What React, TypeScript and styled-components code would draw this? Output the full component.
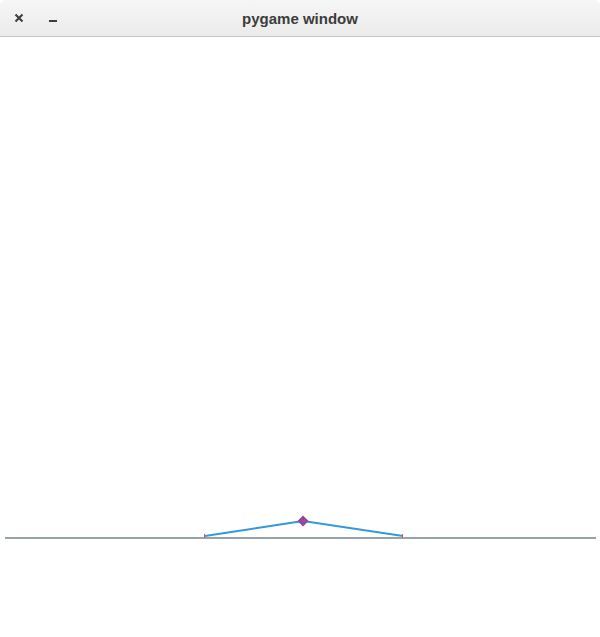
import React from 'react';
import styled, { createGlobalStyle } from 'styled-components';

const GlobalStyle = createGlobalStyle`
  html, body {
    margin: 0;
    padding: 0;
    background: #ffffff;
  }
`;

const Window = styled.div`
  width: 600px;
  height: 637px;
  display: flex;
  flex-direction: column;
  background: #ffffff;
  overflow: hidden;
`;

const TitleBar = styled.div`
  height: 36px;
  flex: none;
  display: flex;
  align-items: center;
  position: relative;
  background: linear-gradient(#f6f6f6, #ebebeb);
  border-bottom: 1px solid #c4c4c4;
  border-radius: 6px 6px 0 0;
  font-family: 'Liberation Sans', 'Noto Sans', sans-serif;
  color: #3c3c3c;
`;

const Controls = styled.div`
  display: flex;
  align-items: center;
  gap: 20px;
  padding-left: 12px;
`;

const ControlButton = styled.span`
  width: 14px;
  display: flex;
  justify-content: center;
  align-items: center;
`;

const Title = styled.div`
  position: absolute;
  left: 0;
  right: 0;
  text-align: center;
  font-size: 15px;
  font-weight: bold;
  pointer-events: none;
`;

const Canvas = styled.svg`
  display: block;
  flex: none;
`;

const groundY = 501;
const legs = [
  { x1: 205, y1: 499, x2: 303, y2: 484 },
  { x1: 303, y1: 484, x2: 403, y2: 499 },
];

export default function App() {
  return (
    <>
      <GlobalStyle />
      <Window>
        <TitleBar>
          <Controls>
            <ControlButton>
              <svg width="10" height="10" viewBox="0 0 10 10">
                <path d="M1.5 1.5 L8.5 8.5 M8.5 1.5 L1.5 8.5" stroke="#3c3c3c" strokeWidth="2" />
              </svg>
            </ControlButton>
            <ControlButton>
              <svg width="10" height="10" viewBox="0 0 10 10">
                <rect x="1" y="7" width="8" height="2" fill="#3c3c3c" />
              </svg>
            </ControlButton>
          </Controls>
          <Title>pygame window</Title>
        </TitleBar>
        <Canvas width={600} height={600} viewBox="0 0 600 600">
          <rect x={5} y={groundY - 1} width={591} height={2} fill="#95a5a6" />
          {legs.map((l, i) => (
            <line key={i} x1={l.x1} y1={l.y1} x2={l.x2} y2={l.y2} stroke="#3498db" strokeWidth={2} />
          ))}
          <rect x={204} y={497} width={1} height={4} fill="#e74c3c" />
          <rect x={402} y={497} width={1} height={4} fill="#e74c3c" />
          <polygon points="303,478.5 308.5,484 303,489.5 297.5,484" fill="#8e44ad" />
          <rect x={302} y={483.5} width={3} height={1} fill="#e74c3c" />
        </Canvas>
      </Window>
    </>
  );
}
